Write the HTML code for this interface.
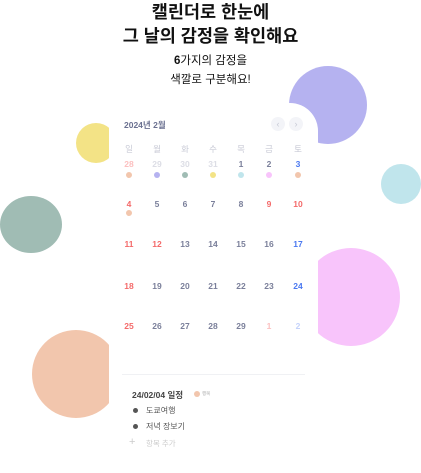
<!DOCTYPE html>
<html><head><meta charset="utf-8"><style>
*{margin:0;padding:0;box-sizing:border-box}
body{width:421px;height:460px;background:#fff;position:relative;overflow:hidden;font-family:"Liberation Sans","Noto Sans CJK KR",sans-serif}
.c{position:absolute;border-radius:50%}
.card{position:absolute;left:109px;top:103px;width:209px;height:370px;background:#fff;border-radius:0 28px 0 0}
.t{position:absolute;white-space:nowrap}
.n{position:absolute;width:20px;text-align:center;font-size:8.5px;font-weight:600;color:#7a7f9a;transform:translateX(-10px)}
.d{position:absolute;width:6px;height:6px;border-radius:50%;transform:translateX(-3px)}
</style></head><body>
<div class="t" style="left:0;width:421px;text-align:center;top:0;font-size:17.5px;font-weight:bold;line-height:24px;color:#111">캘린더로 한눈에<br>그 날의 감정을 확인해요</div>
<div class="t" style="left:0;width:421px;text-align:center;top:52px;font-size:11.5px;line-height:19px;color:#111"><b>6</b>가지의 감정을<br>색깔로 구분해요!</div>
<div class="c" style="left:289px;top:66px;width:78px;height:78px;background:#b5b2f0"></div>
<div class="c" style="left:76px;top:123px;width:40px;height:40px;background:#f3e386"></div>
<div class="c" style="left:381px;top:164px;width:40px;height:40px;background:#c0e5ec"></div>
<div class="c" style="left:0;top:196px;width:62px;height:57px;background:#a0bcb4"></div>
<div class="c" style="left:302px;top:248px;width:98px;height:98px;background:#f8c4fb"></div>
<div class="c" style="left:32px;top:330px;width:88px;height:88px;background:#f2c6ad"></div>
<div class="card"></div>
<div class="t" style="left:124px;top:119px;font-size:8.5px;font-weight:bold;color:#6a7090">2024년 2월</div>
<div class="c" style="left:271px;top:117px;width:14px;height:14px;background:#f3f4f8;color:#c8cad6;font-size:9px;text-align:center;line-height:14px">‹</div>
<div class="c" style="left:289px;top:117px;width:14px;height:14px;background:#f3f4f8;color:#c8cad6;font-size:9px;text-align:center;line-height:14px">›</div>
<div style="position:absolute;left:0;top:0;font-size:8px">
<div class="n" style="left:129px;top:143px;color:#c8cad6;font-weight:normal">일</div>
<div class="n" style="left:157px;top:143px;color:#c8cad6;font-weight:normal">월</div>
<div class="n" style="left:185px;top:143px;color:#c8cad6;font-weight:normal">화</div>
<div class="n" style="left:213px;top:143px;color:#c8cad6;font-weight:normal">수</div>
<div class="n" style="left:241px;top:143px;color:#c8cad6;font-weight:normal">목</div>
<div class="n" style="left:269px;top:143px;color:#c8cad6;font-weight:normal">금</div>
<div class="n" style="left:298px;top:143px;color:#c8cad6;font-weight:normal">토</div>
<div class="n" style="left:129px;top:159px;color:#fcc0c0">28</div>
<div class="n" style="left:157px;top:159px;color:#dcdde5">29</div>
<div class="n" style="left:185px;top:159px;color:#dcdde5">30</div>
<div class="n" style="left:213px;top:159px;color:#dcdde5">31</div>
<div class="n" style="left:241px;top:159px">1</div>
<div class="n" style="left:269px;top:159px">2</div>
<div class="n" style="left:298px;top:159px;color:#4a78f0">3</div>
<div class="d" style="left:129px;top:172px;background:#f2c6ad"></div>
<div class="d" style="left:157px;top:172px;background:#b5b2f0"></div>
<div class="d" style="left:185px;top:172px;background:#a0bcb4"></div>
<div class="d" style="left:213px;top:172px;background:#f3e386"></div>
<div class="d" style="left:241px;top:172px;background:#c0e5ec"></div>
<div class="d" style="left:269px;top:172px;background:#f8c4fb"></div>
<div class="d" style="left:298px;top:172px;background:#f2c6ad"></div>
<div class="n" style="left:129px;top:199px;color:#f46a6a">4</div>
<div class="d" style="left:129px;top:210px;background:#f2c6ad"></div>
<div class="n" style="left:157px;top:199px">5</div><div class="n" style="left:185px;top:199px">6</div><div class="n" style="left:213px;top:199px">7</div><div class="n" style="left:241px;top:199px">8</div>
<div class="n" style="left:269px;top:199px;color:#f46a6a">9</div><div class="n" style="left:298px;top:199px;color:#f46a6a">10</div>
<div class="n" style="left:129px;top:239px;color:#f46a6a">11</div><div class="n" style="left:157px;top:239px;color:#f46a6a">12</div><div class="n" style="left:185px;top:239px">13</div><div class="n" style="left:213px;top:239px">14</div><div class="n" style="left:241px;top:239px">15</div><div class="n" style="left:269px;top:239px">16</div><div class="n" style="left:298px;top:239px;color:#4a78f0">17</div>
<div class="n" style="left:129px;top:281px;color:#f46a6a">18</div><div class="n" style="left:157px;top:281px">19</div><div class="n" style="left:185px;top:281px">20</div><div class="n" style="left:213px;top:281px">21</div><div class="n" style="left:241px;top:281px">22</div><div class="n" style="left:269px;top:281px">23</div><div class="n" style="left:298px;top:281px;color:#4a78f0">24</div>
<div class="n" style="left:129px;top:321px;color:#f46a6a">25</div><div class="n" style="left:157px;top:321px">26</div><div class="n" style="left:185px;top:321px">27</div><div class="n" style="left:213px;top:321px">28</div><div class="n" style="left:241px;top:321px">29</div><div class="n" style="left:269px;top:321px;color:#fcc0c0">1</div><div class="n" style="left:298px;top:321px;color:#c4d2fb">2</div>
</div>
<div style="position:absolute;left:122px;top:374px;width:183px;height:1px;background:#f0f1f4"></div>
<div class="t" style="left:132px;top:389px;font-size:8.5px;font-weight:bold;color:#444">24/02/04 일정</div>
<div class="d" style="left:197px;top:391px;background:#f2c6ad"></div>
<div class="t" style="left:202px;top:391px;font-size:4.5px;color:#aaa">행복</div>
<div class="d" style="left:136px;top:408px;width:5px;height:5px;background:#555"></div>
<div class="t" style="left:146px;top:405px;font-size:8px;color:#555">도쿄여행</div>
<div class="d" style="left:136px;top:424px;width:5px;height:5px;background:#555"></div>
<div class="t" style="left:146px;top:421px;font-size:8px;color:#555">저녁 장보기</div>
<div class="t" style="left:129px;top:436px;font-size:11px;color:#ccc">+</div>
<div class="t" style="left:146px;top:438px;font-size:7.5px;color:#ccc">항목 추가</div>
</body></html>
